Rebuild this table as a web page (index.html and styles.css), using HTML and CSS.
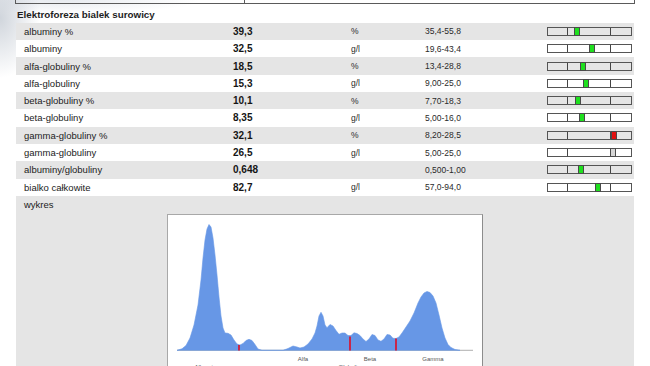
FILE: index.html
```html
<!DOCTYPE html>
<html lang="pl">
<head>
<meta charset="utf-8">
<title>Elektroforeza</title>
<link rel="stylesheet" href="styles.css">
</head>
<body>
<div class="page">
  <div class="topbox"><div class="topcell"></div></div>
  <div class="title">Elektroforeza bialek surowicy</div>
  <div class="table">
    <div class="row grey"><div class="name">albuminy %</div><div class="val">39,3</div><div class="unit">%</div><div class="range">35,4-55,8</div><div class="bar"><span class="seg s1"></span><span class="seg s2"></span><span class="seg s3"></span><span class="mark ok" style="left:26px"></span></div></div>
    <div class="row"><div class="name">albuminy</div><div class="val">32,5</div><div class="unit">g/l</div><div class="range">19,6-43,4</div><div class="bar"><span class="seg s1"></span><span class="seg s2"></span><span class="seg s3"></span><span class="mark ok" style="left:41px"></span></div></div>
    <div class="row grey"><div class="name">alfa-globuliny %</div><div class="val">18,5</div><div class="unit">%</div><div class="range">13,4-28,8</div><div class="bar"><span class="seg s1"></span><span class="seg s2"></span><span class="seg s3"></span><span class="mark ok" style="left:32px"></span></div></div>
    <div class="row"><div class="name">alfa-globuliny</div><div class="val">15,3</div><div class="unit">g/l</div><div class="range">9,00-25,0</div><div class="bar"><span class="seg s1"></span><span class="seg s2"></span><span class="seg s3"></span><span class="mark ok" style="left:35px"></span></div></div>
    <div class="row grey"><div class="name">beta-globuliny %</div><div class="val">10,1</div><div class="unit">%</div><div class="range">7,70-18,3</div><div class="bar"><span class="seg s1"></span><span class="seg s2"></span><span class="seg s3"></span><span class="mark ok" style="left:27px"></span></div></div>
    <div class="row"><div class="name">beta-globuliny</div><div class="val">8,35</div><div class="unit">g/l</div><div class="range">5,00-16,0</div><div class="bar"><span class="seg s1"></span><span class="seg s2"></span><span class="seg s3"></span><span class="mark ok" style="left:31px"></span></div></div>
    <div class="row grey"><div class="name">gamma-globuliny %</div><div class="val">32,1</div><div class="unit">%</div><div class="range">8,20-28,5</div><div class="bar"><span class="seg s1"></span><span class="seg s2"></span><span class="seg s3"></span><span class="mark high" style="left:63px"></span></div></div>
    <div class="row"><div class="name">gamma-globuliny</div><div class="val">26,5</div><div class="unit">g/l</div><div class="range">5,00-25,0</div><div class="bar"><span class="seg s1"></span><span class="seg s2"></span><span class="seg s3"></span><span class="mark edge" style="left:62px"></span></div></div>
    <div class="row grey"><div class="name">albuminy/globuliny</div><div class="val">0,648</div><div class="unit"></div><div class="range">0,500-1,00</div><div class="bar"><span class="seg s1"></span><span class="seg s2"></span><span class="seg s3"></span><span class="mark ok" style="left:30px"></span></div></div>
    <div class="row"><div class="name">bialko całkowite</div><div class="val">82,7</div><div class="unit">g/l</div><div class="range">57,0-94,0</div><div class="bar"><span class="seg s1"></span><span class="seg s2"></span><span class="seg s3"></span><span class="mark ok" style="left:47px"></span></div></div>
    <div class="row grey"><div class="name">wykres</div></div>
    <div class="chartarea">
      <div class="chart">
        <svg class="plot" width="314" height="170" viewBox="168 215 314 170">
          <line x1="177" y1="350.3" x2="473" y2="350.3" stroke="#9a9a9a" stroke-width="0.8"/>
          <polygon fill="#6797e6" stroke="#6797e6" stroke-width="0.6" stroke-linejoin="round" points="177,350.3 182,348.8 186,345.5 190,338 194,325 198,305 201,280 203,258 205,240 207,229 209,224.5 211,227 213,238 215,255 217,275 219,297 221,316 223,328 225,333 228,333.3 231,335 234,340 237,344 240,345 243,343.5 246,340.5 249,339.3 252,340.5 255,344.5 258,349 262,350.3 283,350.3 288,348.5 293,346 297,347 300,348 304,347 308,344 312,339 315,333 317,326 319,316 321,312.3 323,316 325,325 327,327.7 330,324.5 333,326 336,330.5 339,334.3 342,333 345,333 348,335.5 351,335.5 354,332.8 357,333.5 360,335.5 363,339 366,341.5 369,339 372,334.5 375,335.5 378,340 381,341.3 384,339 387,334.5 390,335 393,338.3 396,338.5 399,337 402,333 406,327 410,321 414,313 418,303 421,297 424,293 427,291.5 430,292.5 433,296 436,303 439,315 442,328 445,338 448,344.5 451,347.5 455,349.5 460,350.3"/>
          <rect x="238" y="345" width="2" height="5.5" fill="#c8264a"/>
          <rect x="349" y="336.5" width="2" height="14" fill="#c8264a"/>
          <rect x="395" y="338.5" width="2" height="12" fill="#c8264a"/>
          <text class="lbl" x="303" y="361">Alfa</text>
          <text class="lbl" x="370" y="361">Beta</text>
          <text class="lbl" x="433" y="361">Gamma</text>
          <text class="lbl" x="207" y="369">Albumina</text>
          <text class="lbl" x="351" y="369">Globuliny</text>
        </svg>
      </div>
    </div>
  </div>
</div>
</body>
</html>
```

FILE: styles.css
```css
html, body {
  margin: 0;
  padding: 0;
}
body {
  background:
    radial-gradient(ellipse 40px 60px at 0px 18px, rgba(200, 206, 214, 0.85), rgba(255, 255, 255, 0) 100%),
    radial-gradient(ellipse 140px 14px at 60px 0px, rgba(225, 229, 235, 0.8), rgba(255, 255, 255, 0) 100%),
    #ffffff;
  font-family: "Liberation Sans", Arial, sans-serif;
  color: #222;
  overflow: hidden;
}
.page {
  width: 650px;
}
.topbox {
  margin-left: 15px;
  width: 620px;
  height: 3px;
  box-sizing: content-box;
  border: 1px solid #5a5a5a;
  border-top: none;
  box-sizing: border-box;
  height: 4px;
}
.topcell {
  width: 228px;
  height: 100%;
  border-right: 1px solid #5a5a5a;
}
.title {
  padding: 4px 0 0.7px 17px;
  line-height: 14px;
  font-size: 9.8px;
  font-weight: bold;
  color: #1e1e1e;
}
.table {
  margin-left: 16px;
  width: 618px;
}
.row {
  height: 17.33px;
  display: grid;
  grid-template-columns: 209px 118px 74px 122px 85px;
  align-items: center;
  padding-left: 8px;
  background: #ffffff;
}
.row.grey {
  background: #e5e5e5;
}
.name {
  font-size: 9.5px;
  color: #222;
}
.val {
  font-size: 10px;
  font-weight: bold;
  color: #151515;
}
.unit, .range {
  font-size: 8.5px;
  color: #2a2a2a;
}
.bar {
  position: relative;
  width: 85px;
  height: 9px;
  box-sizing: border-box;
  border: 1px solid #555;
  display: flex;
}
.seg {
  height: 100%;
  box-sizing: border-box;
}
.s1 {
  width: 20px;
  border-right: 1px solid #444;
}
.s2 {
  width: 43px;
  border-right: 1px solid #444;
}
.s3 {
  flex: 1;
}
.mark {
  position: absolute;
  top: -1px;
  width: 6px;
  height: 9px;
  box-sizing: border-box;
  border: 1px solid #4a4a4a;
}
.mark.ok {
  background: #1fe01f;
}
.mark.high {
  background: #e01010;
}
.mark.edge {
  background: #d6d6d6;
}
.chartarea {
  background: #e5e5e5;
  height: 170px;
  padding-top: 1px;
}
.chart {
  margin-left: 151px;
  width: 316px;
  height: 200px;
  box-sizing: border-box;
  background: #ffffff;
  border: 1px solid #a8a8a8;
  border-right-color: #8c8c8c;
}
.plot {
  display: block;
}
.lbl {
  font-family: "Liberation Sans", Arial, sans-serif;
  font-size: 6px;
  fill: #555;
  text-anchor: middle;
}
```
